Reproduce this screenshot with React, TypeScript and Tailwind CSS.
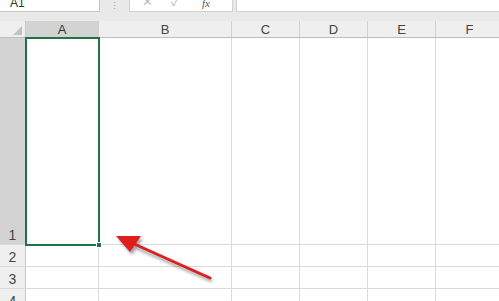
import React from "react";

const cols = [
  { n: "A", w: "w-[73px]" },
  { n: "B", w: "w-[133px]" },
  { n: "C", w: "w-[68px]" },
  { n: "D", w: "w-[68px]" },
  { n: "E", w: "w-[68px]" },
  { n: "F", w: "w-[68px]" },
];

const rows = [
  { n: "1", h: "h-[207px]", sel: true },
  { n: "2", h: "h-[22px]", sel: false },
  { n: "3", h: "h-[22px]", sel: false },
  { n: "4", h: "h-[22px]", sel: false },
];

export default function App() {
  return (
    <div
      className="relative w-[499px] h-[301px] overflow-hidden bg-white text-[#444]"
      style={{ fontFamily: '"Liberation Sans", "Noto Sans CJK SC", sans-serif' }}
    >
      {/* formula bar */}
      <div className="h-[21px] bg-[#e9e9e9] flex items-start">
        <div className="w-[100px] shrink-0 h-[12px] bg-white border-r border-b border-[#c6c6c6] overflow-hidden">
          <div className="mt-[-4px] ml-[10px] text-[12px] leading-[14px] text-[#333]">A1</div>
        </div>
        <div className="w-[29px] shrink-0 h-[12px] flex justify-center overflow-hidden">
          <span className="text-[9px] leading-none text-[#999] mt-[2px]">⋮</span>
        </div>
        <div className="w-[104px] shrink-0 h-[12px] bg-white border-l border-r border-b border-[#d0d0d0] flex items-start overflow-hidden text-[#bdbdbd]">
          <span className="ml-[12px] mt-[-5px] text-[13px] leading-[14px]">✕</span>
          <span className="ml-[18px] mt-[-5px] text-[13px] leading-[14px]">✓</span>
          <span className="ml-[22px] mt-[-4px] text-[11px] leading-[14px] italic text-[#555]" style={{ fontFamily: '"Liberation Serif", serif' }}>fx</span>
        </div>
        <div className="ml-[3px] flex-1 h-[12px] bg-white border-l border-b border-[#d0d0d0]" />
      </div>

      {/* column header */}
      <div className="flex h-[17px] bg-[#efefef] border-b border-[#bdbdbd]">
        <div className="w-[26px] shrink-0 relative border-r border-[#c8c8c8]">
          <svg className="absolute right-[3px] bottom-[2px]" width="9" height="9" viewBox="0 0 9 9">
            <polygon points="9,0 9,9 0,9" fill="#c2c2c2" />
          </svg>
        </div>
        {cols.map((c, i) => (
          <div
            key={c.n}
            className={`${c.w} shrink-0 flex items-center justify-center border-r border-[#d0d0d0] text-[13px] leading-none ${
              i === 0 ? "bg-[#d3d3d3] text-[#333]" : ""
            }`}
          >
            {c.n}
          </div>
        ))}
      </div>

      {/* grid */}
      {rows.map((r) => (
        <div key={r.n} className={`flex ${r.h} border-b border-[#dadada]`}>
          <div
            className={`w-[26px] shrink-0 flex items-end justify-center pb-[2px] border-r border-[#c8c8c8] text-[14px] leading-none ${
              r.sel ? "bg-[#d3d3d3]" : "bg-[#efefef]"
            }`}
          >
            {r.n}
          </div>
          {cols.map((c) => (
            <div key={c.n} className={`${c.w} shrink-0 border-r border-[#dadada]`} />
          ))}
        </div>
      ))}

      {/* selection */}
      <div className="absolute left-[25px] top-[37px] w-[75px] h-[209px] border-2 border-[#217346]" />
      <div className="absolute left-[96px] top-[242px] w-[6px] h-[6px] bg-[#217346] border border-white" />

      {/* arrow */}
      <svg className="absolute left-0 top-0" width="499" height="301" viewBox="0 0 499 301">
        <defs>
          <filter id="sh" x="-20%" y="-20%" width="140%" height="140%">
            <feGaussianBlur stdDeviation="1.5" />
          </filter>
        </defs>
        <g opacity="0.35" filter="url(#sh)" transform="translate(2,3)">
          <line x1="210" y1="278" x2="130" y2="243" stroke="#000" strokeWidth="3" />
          <polygon points="116,236 141,236 130,252" fill="#000" />
        </g>
        <line x1="210" y1="278" x2="132" y2="243" stroke="#e01e1e" strokeWidth="3" strokeLinecap="round" />
        <polygon points="116,236 141,236 130,252" fill="#e01e1e" />
      </svg>
    </div>
  );
}
